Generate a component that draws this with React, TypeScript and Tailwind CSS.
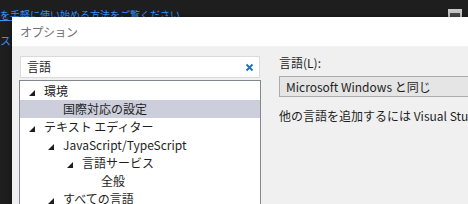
const FONT = "font-['Segoe_UI','Noto_Sans_CJK_JP',sans-serif]";

type Node = { label: string; level: number; expanded?: boolean; selected?: boolean };

const TREE: Node[] = [
  { label: "環境", level: 0, expanded: true },
  { label: "国際対応の設定", level: 1, selected: true },
  { label: "テキスト エディター", level: 0, expanded: true },
  { label: "JavaScript/TypeScript", level: 1, expanded: true },
  { label: "言語サービス", level: 2, expanded: true },
  { label: "全般", level: 3 },
  { label: "すべての言語", level: 1, expanded: true },
];

const INDENT = ["pl-[9px]", "pl-[28px]", "pl-[47px]", "pl-[66px]"];

function Expander({ show }: { show: boolean }) {
  return (
    <span className="w-[6px] h-[6px] mr-[9px] mt-[3px] shrink-0">
      {show && (
        <svg width="6" height="6" viewBox="0 0 6 6">
          <polygon points="6,0 6,6 0,6" fill="#1e1e1e" />
        </svg>
      )}
    </span>
  );
}

function TreeRow({ node }: { node: Node }) {
  return (
    <div
      className={`h-[18px] flex items-center ${INDENT[node.level]} ${
        node.selected ? "bg-[#cccedb]" : ""
      }`}
    >
      <Expander show={!!node.expanded} />
      <span className="whitespace-nowrap text-[12px] leading-[18px] text-[#1e1e1e]">{node.label}</span>
    </div>
  );
}

export default function App() {
  return (
    <div className={`relative w-[468px] h-[204px] overflow-hidden bg-[#1e1e1e] ${FONT}`}>
      {/* start page behind the dialog */}
      <div className="flex justify-between pt-[9px]">
        <div className="flex flex-col gap-[13px] text-[10px] leading-[12px] text-[#3794ff] whitespace-nowrap">
          <span className="underline decoration-[#3794ff]">を手軽に使い始める方法をご覧ください</span>
          <span className="text-[11px]">スタ</span>
        </div>
        <div className="mr-[6px] w-[14px] h-[12px] bg-[#c8c8c8] p-[2px] pt-[4px]">
          <div className="w-full h-full bg-[#4a4a4a]" />
        </div>
      </div>

      {/* options dialog */}
      <div className="absolute left-[12px] top-[17px] w-[480px] h-[210px] flex flex-col shadow-[0_0_6px_rgba(0,0,0,0.4)]">
        <div className="h-[30px] bg-white flex items-center pl-[8px] border-b border-[#f3f3f3]">
          <span className="text-[12px] text-[#717171] tracking-[-0.5px]">オプション</span>
        </div>
        <div className="flex-1 bg-[#f0f0f0] flex pl-[7px] pt-[9px] gap-[18px]">
          {/* left column */}
          <div className="w-[242px] shrink-0 flex flex-col">
            <div className="ml-[1px] mr-[1px] h-[22px] bg-white border border-[#dadada] flex items-center justify-between pl-[6px] pr-[5px]">
              <span className="text-[12px] text-[#1e1e1e]">言語</span>
              <svg width="9" height="9" viewBox="0 0 9 9">
                <path d="M1.5 1.5 L7.5 7.5 M7.5 1.5 L1.5 7.5" stroke="#1c6fc4" strokeWidth="1.8" />
              </svg>
            </div>
            <div className="mt-[2px] flex-1 bg-white border border-[#828790] pt-[1px]">
              {TREE.map((n) => (
                <TreeRow key={n.label} node={n} />
              ))}
            </div>
          </div>

          {/* right column */}
          <div className="flex-1 min-w-0 flex flex-col text-[12px] text-[#1e1e1e] whitespace-nowrap">
            <span className="leading-[16px] mt-[-1px]">言語(L):</span>
            <div className="mt-[5px] h-[21px] bg-[#e5e5e5] border border-[#acacac] flex items-center pl-[6px]">
              Microsoft Windows と同じ
            </div>
            <span className="mt-[11px] leading-[16px]">他の言語を追加するには Visual Studio</span>
          </div>
        </div>
      </div>
    </div>
  );
}
